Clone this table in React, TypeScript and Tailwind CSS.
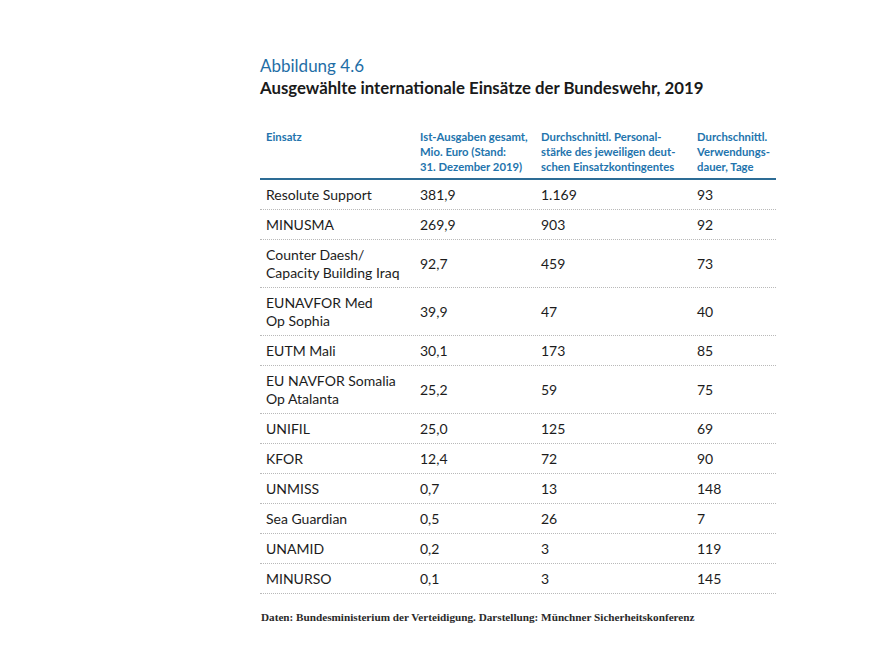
import React from "react";

const rows: { name: string[]; a: string; b: string; c: string }[] = [
  { name: ["Resolute Support"], a: "381,9", b: "1.169", c: "93" },
  { name: ["MINUSMA"], a: "269,9", b: "903", c: "92" },
  { name: ["Counter Daesh/", "Capacity Building Iraq"], a: "92,7", b: "459", c: "73" },
  { name: ["EUNAVFOR Med", "Op Sophia"], a: "39,9", b: "47", c: "40" },
  { name: ["EUTM Mali"], a: "30,1", b: "173", c: "85" },
  { name: ["EU NAVFOR Somalia", "Op Atalanta"], a: "25,2", b: "59", c: "75" },
  { name: ["UNIFIL"], a: "25,0", b: "125", c: "69" },
  { name: ["KFOR"], a: "12,4", b: "72", c: "90" },
  { name: ["UNMISS"], a: "0,7", b: "13", c: "148" },
  { name: ["Sea Guardian"], a: "0,5", b: "26", c: "7" },
  { name: ["UNAMID"], a: "0,2", b: "3", c: "119" },
  { name: ["MINURSO"], a: "0,1", b: "3", c: "145" },
];

const cols = "grid grid-cols-[154px_121px_156px_85px]";

export default function App() {
  return (
    <div className="w-[892px] h-[655px] bg-white text-[#1c1c1c] font-['Lato',sans-serif]">
      <div className="pl-[260px] pt-[55px]">
        <div className="text-[17px] leading-[22px] text-[#1f6ea6]">Abbildung 4.6</div>
        <div className="text-[16.8px] leading-[22px] font-bold text-[#1a1a1a]">
          Ausgewählte internationale Einsätze der Bundeswehr, 2019
        </div>
        <div className="w-[516px] mt-[30px]">
          <div className={`${cols} border-b-2 border-[#2d6c95] pb-[4px] text-[11.3px] leading-[15px] font-bold text-[#2374ad]`}>
            <div className="pl-[6px]">Einsatz</div>
            <div className="pl-[6px]">
              Ist-Ausgaben gesamt,
              <br />
              Mio. Euro (Stand:
              <br />
              31. Dezember 2019)
            </div>
            <div className="pl-[6px]">
              Durchschnittl. Personal-
              <br />
              stärke des jeweiligen deut-
              <br />
              schen Einsatzkontingentes
            </div>
            <div className="pl-[6px]">
              Durchschnittl.
              <br />
              Verwendungs-
              <br />
              dauer, Tage
            </div>
          </div>
          {rows.map((r, i) => (
            <div
              key={i}
              className={`${cols} items-center border-b border-dotted border-[#b9b9b9] pt-[6px] pb-[5px] text-[14px] leading-[18px]`}
            >
              <div className="pl-[6px]">
                {r.name.map((n, j) => (
                  <div key={j}>{n}</div>
                ))}
              </div>
              <div className="pl-[6px]">{r.a}</div>
              <div className="pl-[6px]">{r.b}</div>
              <div className="pl-[6px]">{r.c}</div>
            </div>
          ))}
          <div className="mt-[16px] pl-[1px] text-[11.2px] leading-[14px] font-['Liberation_Serif',serif] font-bold text-[#2a2a2a]">
            Daten: Bundesministerium der Verteidigung. Darstellung: Münchner Sicherheitskonferenz
          </div>
        </div>
      </div>
    </div>
  );
}
